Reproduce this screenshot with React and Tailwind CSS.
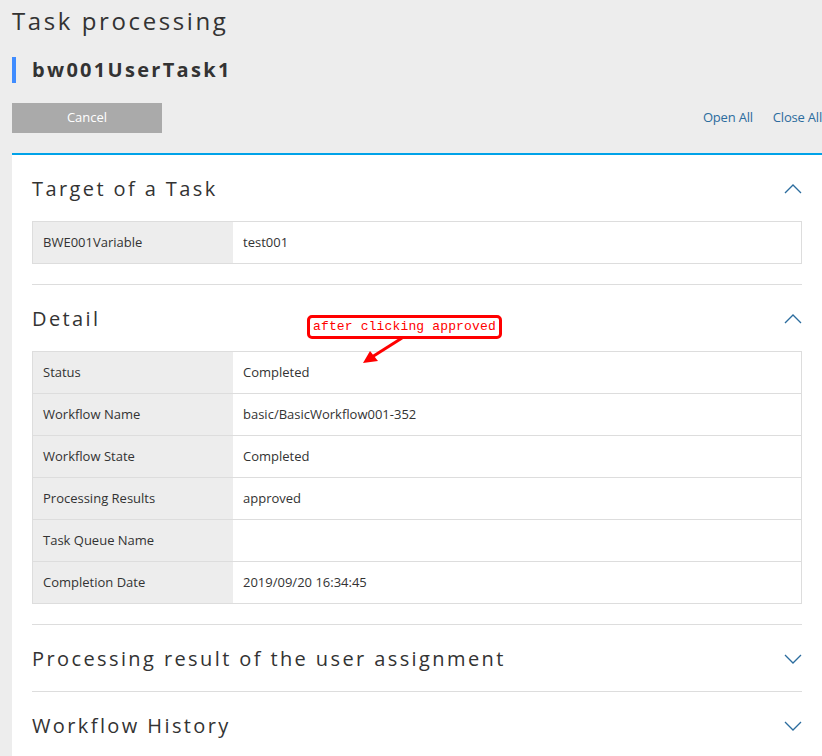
const detailRows = [
  ['Status', 'Completed'],
  ['Workflow Name', 'basic/BasicWorkflow001-352'],
  ['Workflow State', 'Completed'],
  ['Processing Results', 'approved'],
  ['Task Queue Name', ''],
  ['Completion Date', '2019/09/20 16:34:45'],
];

const Chevron = ({ up }) => (
  <svg width="18" height="10" viewBox="0 0 18 10" className="text-[#2b6c9e]">
    <path d={up ? 'M1 9 L9 1 L17 9' : 'M1 1 L9 9 L17 1'} fill="none" stroke="currentColor" strokeWidth="1.3" />
  </svg>
);

const InfoTable = ({ rows }) => (
  <div className="border border-[#dddddd] text-[13px] text-[#333]">
    {rows.map(([label, value], i) => (
      <div key={label} className={`flex ${i > 0 ? 'h-[42px] border-t border-[#dddddd]' : 'h-[41px]'}`}>
        <div className="w-[200px] shrink-0 bg-[#ededed] pl-[10px] flex items-center">{label}</div>
        <div className="flex-1 pl-[10px] flex items-center">{value}</div>
      </div>
    ))}
  </div>
);

const Section = ({ title, open, children, first }) => (
  <div className={first ? '' : 'border-t border-[#dddddd]'}>
    <div className="h-[66px] pt-[2px] flex items-center justify-between">
      <h2 className="text-[20px] tracking-[2.4px] text-[#333] font-normal">{title}</h2>
      <Chevron up={open} />
    </div>
    {open && <div className="pb-5">{children}</div>}
  </div>
);

export default function App() {
  return (
    <div className="min-h-[756px] w-[822px] overflow-hidden bg-[#ededed]" style={{ fontFamily: '"Open Sans", "Noto Sans", sans-serif' }}>
      <div className="ml-3 w-[810px]">
        <h1 className="pt-[3px] text-[24px] leading-[36px] tracking-[2.6px] text-[#333] font-normal">Task processing</h1>
        <div className="mt-[18px] flex items-center h-[26px] border-l-4 border-[#3f8cff] pl-4">
          <span className="text-[20px] font-bold tracking-[2.3px] text-[#333]">bw001UserTask1</span>
        </div>
        <div className="mt-[20px] flex items-center justify-between">
          <button className="w-[150px] h-[30px] bg-[#aaaaaa] text-white text-[13px]">Cancel</button>
          <div className="flex gap-5 text-[13px] tracking-[-0.2px] text-[#2b6c9e]">
            <a href="#">Open All</a>
            <a href="#">Close All</a>
          </div>
        </div>
        <div className="mt-[20px] border-t-[2px] border-[#00a2e8] bg-white px-5 relative">
          <Section title="Target of a Task" open first>
            <InfoTable rows={[['BWE001Variable', 'test001']]} />
          </Section>
          <Section title="Detail" open>
            <InfoTable rows={detailRows} />
          </Section>
          <Section title="Processing result of the user assignment" />
          <Section title="Workflow History" />

          <div className="absolute left-[295px] top-[160px] border-[3px] border-[#ff0000] rounded-[5px] bg-white px-[3px] h-[24px] flex items-center">
            <span className="text-[13px] tracking-[0.15px] text-[#ff0000]" style={{ fontFamily: '"Liberation Mono", monospace' }}>after clicking approved</span>
          </div>
          <svg className="absolute left-[340px] top-[180px]" width="60" height="40" viewBox="0 0 60 40">
            <line x1="50" y1="3" x2="20" y2="22" stroke="#ff0000" strokeWidth="3" />
            <polygon points="11,28 18,16 26,26" fill="#ff0000" />
          </svg>
        </div>
      </div>
    </div>
  );
}
